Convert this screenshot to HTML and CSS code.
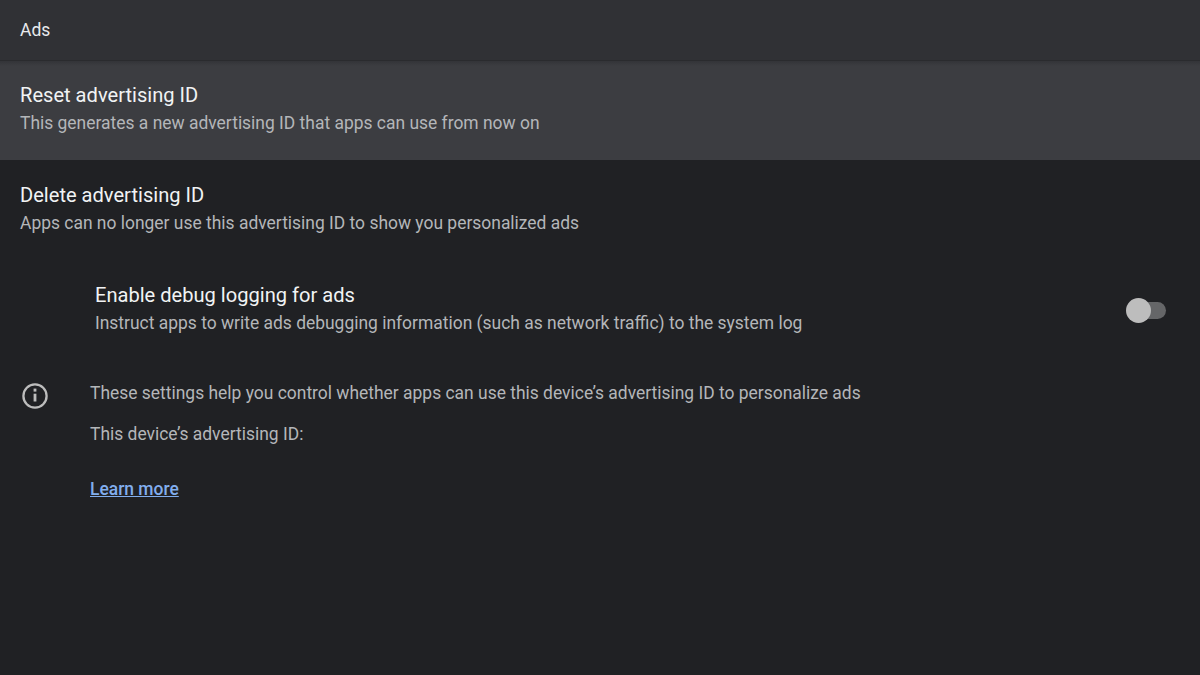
FILE: index.html
```html
<!DOCTYPE html>
<html lang="en">
<head>
    <meta charset="UTF-8">
    <title>Ads</title>
    <link rel="stylesheet" href="styles.css">
</head>
<body>
<div class="toolbar">Ads</div>
<div class="row selected">
    <div class="row-title">Reset advertising ID</div>
    <div class="row-sub">This generates a new advertising ID that apps can use from now on</div>
</div>
<div class="row">
    <div class="row-title">Delete advertising ID</div>
    <div class="row-sub">Apps can no longer use this advertising ID to show you personalized ads</div>
</div>
<div class="row row-switch">
    <div class="switch-text">
        <div class="row-title">Enable debug logging for ads</div>
        <div class="row-sub">Instruct apps to write ads debugging information (such as network traffic) to the system log</div>
    </div>
    <div class="switch">
        <div class="thumb"></div>
    </div>
</div>
<div class="footer">
    <svg class="info" viewBox="0 0 26 26" width="26" height="26">
        <circle cx="13" cy="13" r="11.6" fill="none" stroke="#bdbdbd" stroke-width="2.3"/>
        <rect x="11.6" y="10.7" width="2.8" height="7.8" fill="#bdbdbd"/>
        <rect x="11.6" y="5.6" width="2.8" height="3" fill="#bdbdbd"/>
    </svg>
    <div class="footer-text">
        <p>These settings help you control whether apps can use this device’s advertising ID to personalize ads</p>
        <p>This device’s advertising ID:</p>
        <p class="learn"><a href="#">Learn more</a></p>
    </div>
</div>
</body>
</html>
```

FILE: styles.css
```css
*{
    margin:0;
    padding:0;
    box-sizing:border-box;
}
html,body{
    height:100%;
}
body{
    background:#202124;
    font-family:Roboto,"Liberation Sans",sans-serif;
    overflow:hidden;
}
.toolbar{
    height:61px;
    padding:20px 20px 0;
    background:#303135;
    border-bottom:1px solid #2a2b2e;
    color:#e8eaed;
    font-size:17.5px;
    line-height:20px;
}
.row{
    height:100px;
    padding:22px 20px 0;
}
.selected{
    height:99px;
    padding-top:21px;
    background:linear-gradient(#333438,#3c3d41 5px);
}
.row-title{
    color:#f1f3f4;
    font-size:20.1px;
    line-height:26px;
}
.row-sub{
    margin-top:3px;
    color:#b4b6b9;
    font-size:17.45px;
    line-height:24px;
}
.row-switch{
    display:flex;
    align-items:flex-start;
    justify-content:space-between;
    padding:22px 34px 0 95px;
}
.switch{
    position:relative;
    width:39px;
    height:17px;
    margin-top:20px;
    border-radius:9px;
    background:#656668;
}
.thumb{
    position:absolute;
    left:-1px;
    top:-4px;
    width:25px;
    height:25px;
    border-radius:50%;
    background:#bdbdbd;
}
.footer{
    display:flex;
    padding:21px 0 0 22px;
}
.info{
    flex:none;
    margin-top:2px;
}
.footer-text{
    margin-left:42px;
    color:#b4b6b9;
    font-size:17.45px;
    line-height:24px;
}
.footer-text p{
    margin-bottom:17px;
}
.footer-text .learn{
    margin-top:31px;
}
.learn a{
    color:#82aeee;
    font-weight:500;
}
```
